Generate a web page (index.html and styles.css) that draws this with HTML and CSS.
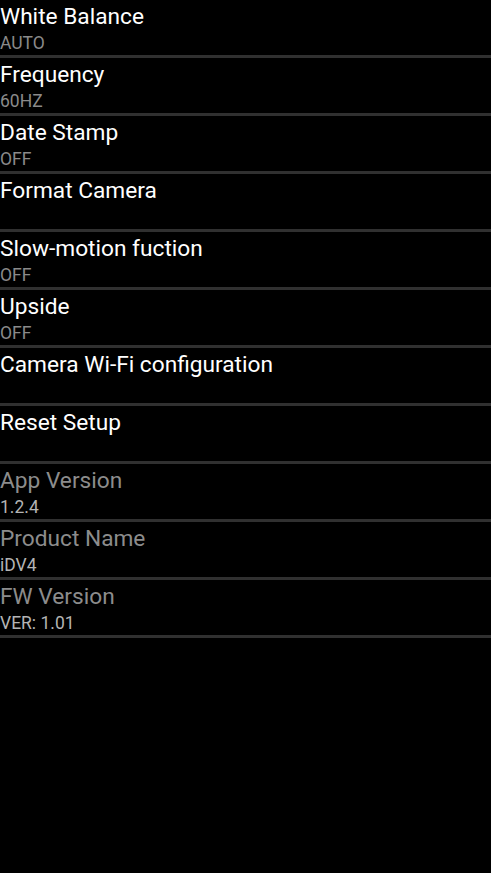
FILE: index.html
```html
<!DOCTYPE html>
<html lang="en">
<head>
    <meta charset="UTF-8">
    <meta name="viewport" content="width=device-width, initial-scale=1.0">
    <title>Camera Settings</title>
    <link rel="stylesheet" href="styles.css">
</head>
<body>
    <ul class="settings-list">
        <li class="setting-item">
            <div class="setting-title">White Balance</div>
            <div class="setting-value">AUTO</div>
        </li>
        <li class="setting-item">
            <div class="setting-title">Frequency</div>
            <div class="setting-value">60HZ</div>
        </li>
        <li class="setting-item">
            <div class="setting-title">Date Stamp</div>
            <div class="setting-value">OFF</div>
        </li>
        <li class="setting-item">
            <div class="setting-title">Format Camera</div>
            <div class="setting-value"></div>
        </li>
        <li class="setting-item">
            <div class="setting-title">Slow-motion fuction</div>
            <div class="setting-value">OFF</div>
        </li>
        <li class="setting-item">
            <div class="setting-title">Upside</div>
            <div class="setting-value">OFF</div>
        </li>
        <li class="setting-item">
            <div class="setting-title">Camera Wi-Fi configuration</div>
            <div class="setting-value"></div>
        </li>
        <li class="setting-item">
            <div class="setting-title">Reset Setup</div>
            <div class="setting-value"></div>
        </li>

        <!-- Read-only info -->
        <li class="setting-item disabled">
            <div class="setting-title">App Version</div>
            <div class="setting-value">1.2.4</div>
        </li>
        <li class="setting-item disabled">
            <div class="setting-title">Product Name</div>
            <div class="setting-value">iDV4</div>
        </li>
        <li class="setting-item disabled">
            <div class="setting-title">FW Version</div>
            <div class="setting-value">VER: 1.01</div>
        </li>
    </ul>
</body>
</html>
```

FILE: styles.css
```css
body {
    margin: 0;
    padding: 0;
    background: #000;
    color: #fff;
    font-family: Roboto, "Noto Sans", sans-serif;
}

.settings-list {
    list-style: none;
    margin: 0;
    padding: 0;
}

.setting-item {
    height: 55px;
    border-bottom: 3px solid #303030;
    display: flex;
    flex-direction: column;
}

.setting-title {
    font-size: 22.7px;
    line-height: 34px;
    color: #fff;
}

.setting-value {
    font-size: 17.5px;
    line-height: 18px;
    color: #8a8a8a;
}

.disabled .setting-title {
    color: #8c8c8c;
}

.disabled .setting-value {
    color: #b4b4b4;
}
```
